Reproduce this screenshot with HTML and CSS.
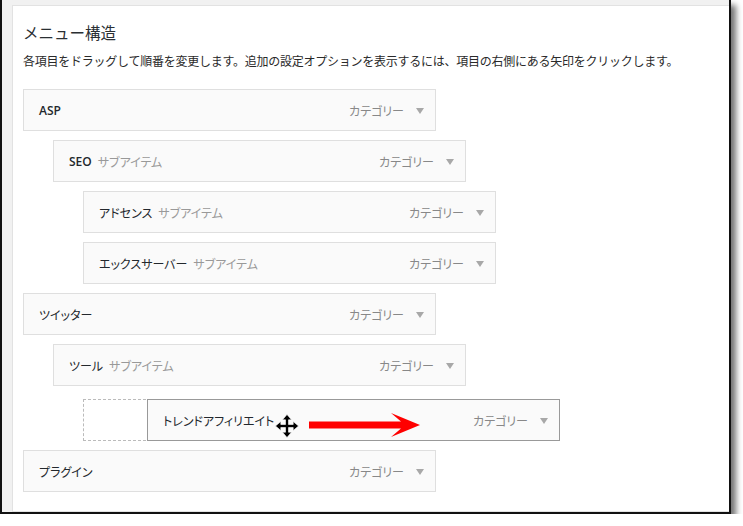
FILE: index.html
```html
<!DOCTYPE html>
<html lang="ja">
<head>
<meta charset="utf-8">
<link rel="stylesheet" href="styles.css">
</head>
<body>
<div class="frame">
  <div class="panel">
    <h2 class="title">メニュー構造</h2>
    <p class="desc">各項目をドラッグして順番を変更します。追加の設定オプションを表示するには、項目の右側にある矢印をクリックします。</p>
    <ul class="menu">
      <li class="item d0"><span class="name strong">ASP</span><span class="type">カテゴリー</span><span class="caret"></span></li>
      <li class="item d1"><span class="name strong">SEO</span><span class="sub">サブアイテム</span><span class="type">カテゴリー</span><span class="caret"></span></li>
      <li class="item d2"><span class="name">アドセンス</span><span class="sub">サブアイテム</span><span class="type">カテゴリー</span><span class="caret"></span></li>
      <li class="item d2"><span class="name">エックスサーバー</span><span class="sub">サブアイテム</span><span class="type">カテゴリー</span><span class="caret"></span></li>
      <li class="item d0"><span class="name">ツイッター</span><span class="type">カテゴリー</span><span class="caret"></span></li>
      <li class="item d1"><span class="name">ツール</span><span class="sub">サブアイテム</span><span class="type">カテゴリー</span><span class="caret"></span></li>
      <li class="placeholder d2">
        <div class="item dragging"><span class="name">トレンドアフィリエイト</span><span class="type">カテゴリー</span><span class="caret"></span>
          <svg class="move" width="24" height="24" viewBox="0 0 24 24"><path d="M12 0.5 L16.5 5.8 L13.5 5.8 L13.5 10.5 L18.2 10.5 L18.2 7.5 L23.5 12 L18.2 16.5 L18.2 13.5 L13.5 13.5 L13.5 18.2 L16.5 18.2 L12 23.5 L7.5 18.2 L10.5 18.2 L10.5 13.5 L5.8 13.5 L5.8 16.5 L0.5 12 L5.8 7.5 L5.8 10.5 L10.5 10.5 L10.5 5.8 L7.5 5.8 Z" fill="#000" stroke="#fff" stroke-width="0.6"/></svg>
          <svg class="arrow" width="112" height="26" viewBox="0 0 112 26"><path d="M0 9.5 L92 9.5 L82 1 L111 13 L82 25 L92 16.5 L0 16.5 Z" fill="#f00"/></svg>
        </div>
      </li>
      <li class="item d0"><span class="name">プラグイン</span><span class="type">カテゴリー</span><span class="caret"></span></li>
    </ul>
  </div>
</div>
</body>
</html>
```
FILE: styles.css
```css
html, body {
  margin: 0;
  padding: 0;
  background: #fff;
}
body {
  font-family: "Noto Sans CJK JP", "Noto Sans", sans-serif;
  color: #23282d;
}
.frame {
  border-left: 2px solid #111;
  border-right: 2px solid #111;
  border-bottom: 2px solid #111;
  background: #f1f1f1;
  padding: 5px 0 0 10px;
  box-sizing: border-box;
  width: 731px;
  height: 514px;
  box-shadow: 5px 5px 6px rgba(0,0,0,0.55);
  display: flex;
  overflow: hidden;
}
.panel {
  flex: 1;
  background: #fff;
  border: 1px solid #e2e2e2;
  border-right: none;
  padding: 15px 0 0 10px;
}
.title {
  margin: 0;
  font-size: 15.5px;
  line-height: 22px;
  font-weight: 400;
  color: #2a2f33;
}
.desc {
  margin: 9px 0 0;
  font-size: 12px;
  letter-spacing: -0.25px;
  line-height: 18px;
  color: #2a2a2a;
  white-space: nowrap;
}
.menu {
  list-style: none;
  margin: 19px 0 0;
  padding: 0;
  display: flex;
  flex-direction: column;
  gap: 9px;
  font-feature-settings: "palt";
}
.item {
  width: 413px;
  height: 42px;
  box-sizing: border-box;
  border: 1px solid #dfdfdf;
  background: #fafafa;
  display: flex;
  align-items: center;
  padding: 0 11px 0 15px;
  font-size: 12px;
  position: relative;
}
.d1 { margin-left: 30px; }
.d2 { margin-left: 60px; }
.name {
  color: #23282d;
}
.strong {
  font-family: "Open Sans", "Noto Sans CJK JP", sans-serif;
  font-weight: 600;
  font-size: 12px;
}
.sub {
  color: #999;
  margin-left: 6px;
}
.type {
  margin-left: auto;
  color: #888;
}
.caret {
  width: 0;
  height: 0;
  border-left: 4px solid transparent;
  border-right: 4px solid transparent;
  border-top: 6px solid #a8a8a8;
  margin-left: 12px;
  margin-top: 2px;
}
.placeholder {
  width: 413px;
  height: 42px;
  box-sizing: border-box;
  border: 1px dashed #bbb;
  margin-top: 4px;
  position: relative;
}
.dragging {
  position: absolute;
  left: 63px;
  top: -1px;
  border-color: #999;
  background: #fafafa;
}
.move {
  position: absolute;
  left: 127px;
  top: 14px;
}
.arrow {
  position: absolute;
  left: 161px;
  top: 12px;
}
```
